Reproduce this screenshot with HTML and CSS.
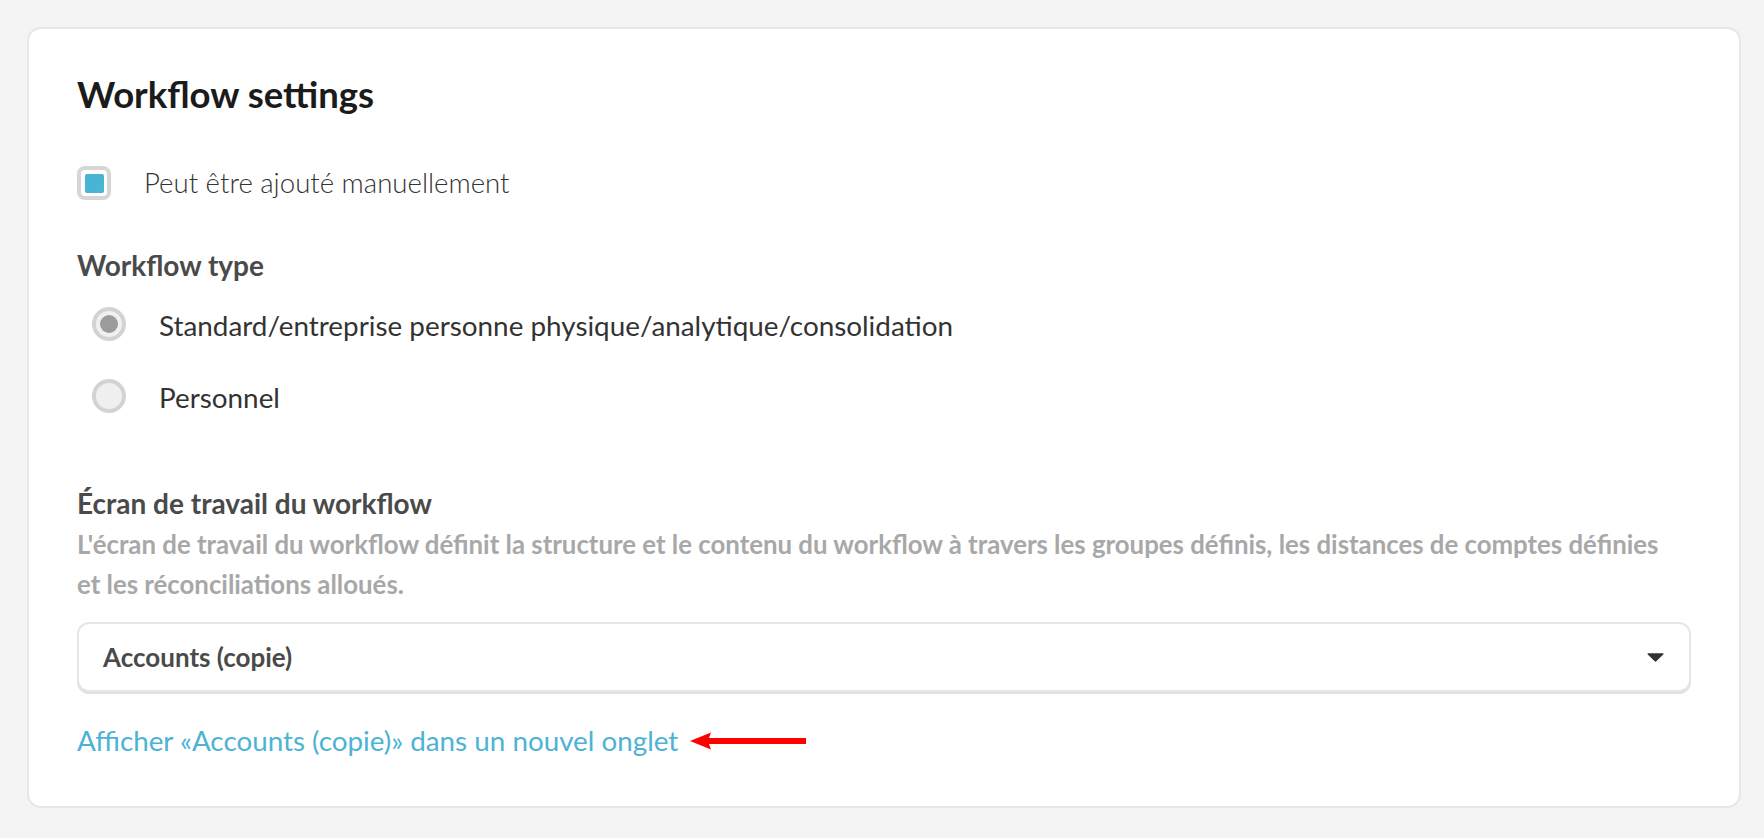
FILE: index.html
```html
<!DOCTYPE html>
<html lang="fr">
<head>
<meta charset="utf-8">
<title>Workflow settings</title>
<link rel="stylesheet" href="styles.css">
</head>
<body>
<div class="page">
  <section class="card">
    <h1 class="title">Workflow settings</h1>

    <label class="check-row">
      <span class="checkbox"><span class="checkbox-mark"></span></span>
      <span class="check-label">Peut être ajouté manuellement</span>
    </label>

    <h3 class="field-title type-title">Workflow type</h3>
    <div class="radio-list">
      <label class="radio-row">
        <span class="radio radio-on"><span class="radio-dot"></span></span>
        <span class="radio-label">Standard/entreprise personne physique/analytique/consolidation</span>
      </label>
      <label class="radio-row">
        <span class="radio"></span>
        <span class="radio-label">Personnel</span>
      </label>
    </div>

    <h3 class="field-title screen-title">Écran de travail du workflow</h3>
    <p class="description">L'écran de travail du workflow définit la structure et le contenu du workflow à travers les groupes définis, les distances de comptes définies et les réconciliations alloués.</p>

    <div class="select">
      <span class="select-value">Accounts (copie)</span>
      <svg class="caret" width="17" height="9" viewBox="0 0 17 9" aria-hidden="true">
        <path d="M1.2 1 H15.8 L8.5 8 Z" fill="#333" stroke="#333" stroke-width="1.4" stroke-linejoin="round"/>
      </svg>
    </div>

    <div class="link-row">
      <a class="link" href="#">Afficher «Accounts (copie)» dans un nouvel onglet</a>
      <svg class="arrow" width="117" height="18" viewBox="0 0 117 18" aria-hidden="true">
        <path d="M0 9 L21 0.5 L19 6 H116 V12 H19 L21 17.5 Z" fill="#ff0000"/>
      </svg>
    </div>
  </section>
</div>
</body>
</html>
```

FILE: styles.css
```css
* {
  box-sizing: border-box;
}

html, body {
  margin: 0;
  padding: 0;
  background: #f4f4f4;
}

body {
  font-family: Lato, "Open Sans", "Liberation Sans", sans-serif;
  color: #333;
}

.page {
  padding: 27px 23px 30px 27px;
}

.card {
  background: #ffffff;
  border: 2px solid #e6e6e6;
  border-radius: 14px;
  padding: 43px 48px 50px 48px;
  height: 781px;
}

.title {
  margin: 0;
  font-size: 36.5px;
  line-height: 44px;
  font-weight: 700;
  color: #1b1b1b;
}

.check-row {
  margin-top: 50px;
  display: flex;
  align-items: center;
  gap: 33px;
  height: 34px;
}

.checkbox {
  width: 34px;
  height: 34px;
  border: 4px solid #d6d6d6;
  border-radius: 8px;
  background: #fff;
  display: flex;
  align-items: center;
  justify-content: center;
  flex: none;
}

.checkbox-mark {
  width: 19px;
  height: 19px;
  border-radius: 2px;
  background: #4ab4d4;
}

.check-label {
  font-size: 27.6px;
  line-height: 30px;
  font-weight: 300;
  color: #333;
}

.field-title {
  margin: 0;
  font-size: 28px;
  line-height: 30px;
  font-weight: 700;
  color: #4a4a4a;
}

.type-title {
  margin-top: 50px;
}

.radio-list {
  margin-top: 27px;
  padding-left: 15px;
  display: flex;
  flex-direction: column;
  gap: 38px;
}

.radio-row {
  display: flex;
  align-items: center;
  gap: 33px;
  height: 34px;
}

.radio {
  width: 34px;
  height: 34px;
  border-radius: 50%;
  border: 4px solid #d3d3d3;
  background: #f0f0f0;
  display: flex;
  align-items: center;
  justify-content: center;
  flex: none;
}

.radio-dot {
  width: 18px;
  height: 18px;
  border-radius: 50%;
  background: #9b9b9b;
}

.radio-label {
  font-size: 27.85px;
  line-height: 30px;
  font-weight: 400;
  color: #333;
  padding-top: 4px;
}

.screen-title {
  margin-top: 75px;
}

.description {
  margin: 7px 0 0 0;
  padding-right: 20px;
  font-size: 25.8px;
  line-height: 39.5px;
  font-weight: 700;
  color: #a8a8a8;
}

.select {
  margin-top: 18px;
  height: 70px;
  border: 2px solid #e6e6e6;
  border-radius: 12px;
  box-shadow: 0 2px 0 #e0e0e0;
  background: #fff;
  display: flex;
  align-items: center;
  justify-content: space-between;
  padding: 0 25px 0 24px;
}

.select-value {
  font-size: 26px;
  font-weight: 700;
  color: #4a4a4a;
}

.caret {
  display: block;
  flex: none;
}

.link-row {
  margin-top: 34px;
  display: flex;
  align-items: center;
  gap: 12px;
  height: 30px;
}

.link {
  font-size: 27.8px;
  line-height: 30px;
  color: #4cb3d4;
  text-decoration: none;
}

.arrow {
  display: block;
  flex: none;
}
```
